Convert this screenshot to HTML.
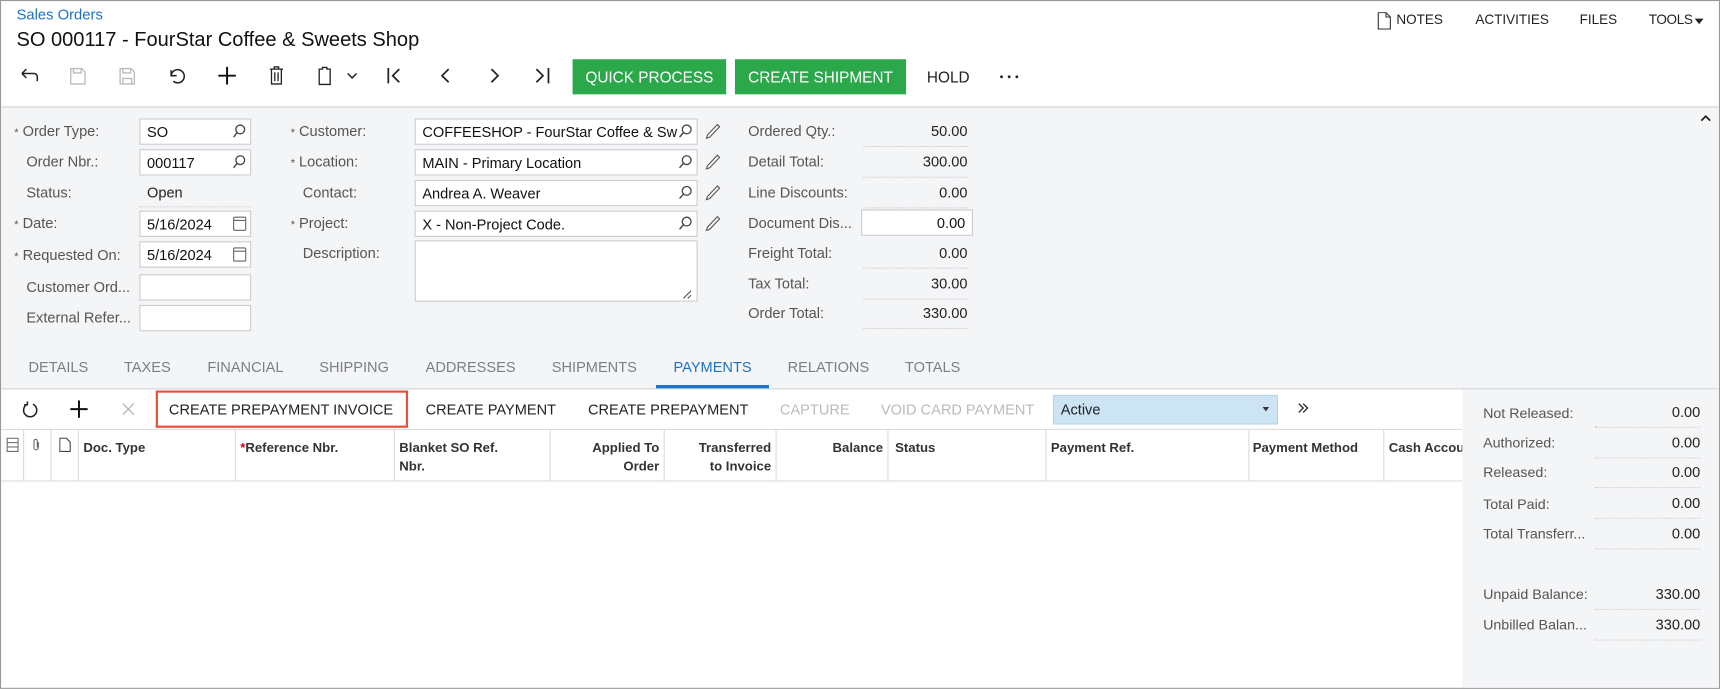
<!DOCTYPE html>
<html><head><meta charset="utf-8"><style>
*{box-sizing:border-box;margin:0;padding:0}
body{width:1720px;height:689px;overflow:hidden;background:#fff;font-family:"Liberation Sans",Arial,sans-serif;}
#w{position:absolute;left:0;top:0;width:1568px;height:628px;transform:scale(1.09694);transform-origin:0 0;border:1px solid #9a9a9a;overflow:hidden;color:#222;font-size:13.3px}
.a{position:absolute;white-space:nowrap}
.lb{color:#555;font-size:13.3px}
.inp{position:absolute;height:24px;background:#fff;border:1px solid #c9ccd0;font-size:13.3px;padding:4px 6px 0;line-height:15px;color:#111;white-space:nowrap;overflow:hidden}
.val{position:absolute;width:95px;text-align:right;border-bottom:1px dotted #c8c8c8;height:22px;font-size:13.3px}
.tab{position:absolute;top:326px;color:#7a7f87;font-size:13.3px}
.th{position:absolute;top:399px;font-size:12px;font-weight:bold;color:#333;line-height:17px}
.sep{position:absolute;top:391px;width:1px;height:46px;background:#dcdcdc}
.rl{position:absolute;left:1351px;color:#555;font-size:13px}
.rv{position:absolute;left:1453px;width:96px;text-align:right;font-size:13.3px;border-bottom:1px dotted #ccc;height:22px}
svg{position:absolute}
</style></head><body><div id="w">
<div class="a" style="left:14px;top:5px;color:#1a73c7;font-size:13.5px">Sales Orders</div>
<div class="a" style="left:14px;top:24px;font-size:18.3px;color:#111">SO 000117 - FourStar Coffee &amp; Sweets Shop</div>
<svg style="left:1254px;top:10px" width="14" height="16" viewBox="0 0 14 16"><path d="M1.5 .5h7l4 4v11h-11z M8.5 .5v4h4" fill="none" stroke="#333"/></svg>
<div class="a" style="left:1272px;top:10px;font-size:12.3px">NOTES</div>
<div class="a" style="left:1344px;top:10px;font-size:12.3px">ACTIVITIES</div>
<div class="a" style="left:1439px;top:10px;font-size:12.3px">FILES</div>
<div class="a" style="left:1502px;top:10px;font-size:12.3px;letter-spacing:-0.3px">TOOLS</div>
<div class="a" style="left:1544px;top:16px;width:0;height:0;border-left:4px solid transparent;border-right:4px solid transparent;border-top:5px solid #222"></div>
<!-- toolbar -->
<svg style="left:16px;top:60px" width="20" height="16" viewBox="0 0 20 16"><path d="M3 6h11a3 3 0 0 1 3 3v4 M3 6l4-4 M3 6l4 4" fill="none" stroke="#222" stroke-width="1.4"/></svg>
<svg style="left:62px;top:60px" width="16" height="17" viewBox="0 0 16 17"><path d="M1.5 1.5h10l3 3v11h-13z M4 1.5v4h7v-4" fill="none" stroke="#bbb" stroke-width="1.2"/></svg>
<svg style="left:107px;top:60px" width="16" height="17" viewBox="0 0 16 17"><path d="M1.5 1.5h10l3 3v11h-13z M4 1.5v4h7v-4 M4 15.5v-5h8v5" fill="none" stroke="#bbb" stroke-width="1.2"/></svg>
<svg style="left:151px;top:60px" width="18" height="16" viewBox="0 0 18 16"><path d="M4 3v5h5 M4 8a6 6 0 1 1 2 5" fill="none" stroke="#222" stroke-width="1.4"/></svg>
<svg style="left:197px;top:59px" width="18" height="18"><path d="M9 1v16 M1 9h16" stroke="#111" stroke-width="1.8"/></svg>
<svg style="left:244px;top:59px" width="14" height="18" viewBox="0 0 14 18"><path d="M1 3h12 M5 3V1h4v2 M2.5 3.5v13h9v-13 M5.5 6v8 M8.5 6v8" fill="none" stroke="#222" stroke-width="1.2"/></svg>
<svg style="left:288px;top:59px" width="40" height="18" viewBox="0 0 40 18"><path d="M2 3h3V1.5h4V3h3v14H2z" fill="none" stroke="#222" stroke-width="1.2"/><path d="M28 7l4 4 4-4" fill="none" stroke="#222" stroke-width="1.4"/></svg>
<svg style="left:351px;top:60px" width="16" height="16"><path d="M2 1v14 M12 2L6 8l6 6" fill="none" stroke="#222" stroke-width="1.6"/></svg>
<svg style="left:398px;top:60px" width="14" height="16"><path d="M10 2L4 8l6 6" fill="none" stroke="#222" stroke-width="1.6"/></svg>
<svg style="left:443px;top:60px" width="14" height="16"><path d="M4 2l6 6-6 6" fill="none" stroke="#222" stroke-width="1.6"/></svg>
<svg style="left:486px;top:60px" width="16" height="16"><path d="M2 2l6 6-6 6 M13 1v14" fill="none" stroke="#222" stroke-width="1.6"/></svg>
<div class="a" style="left:521px;top:53px;width:140px;height:32px;background:#2aa84a;color:#fff;font-size:14px;line-height:32px;text-align:center">QUICK PROCESS</div>
<div class="a" style="left:669px;top:53px;width:156px;height:32px;background:#2aa84a;color:#fff;font-size:14px;line-height:32px;text-align:center">CREATE SHIPMENT</div>
<div class="a" style="left:844px;top:61px;font-size:14px">HOLD</div>
<svg style="left:910px;top:67px" width="20" height="4"><circle cx="2" cy="2" r="1.3" fill="#222"/><circle cx="9" cy="2" r="1.3" fill="#222"/><circle cx="16" cy="2" r="1.3" fill="#222"/></svg>
<!-- form area -->
<div class="a" style="left:0;top:96px;width:1568px;height:258px;background:#f4f5f7;border-top:1px solid #d2d4d7;border-bottom:1px solid #d2d4d7"></div>
<svg style="left:1548px;top:102px" width="12" height="10"><path d="M2 7l4-4 4 4" fill="none" stroke="#222" stroke-width="1.6"/></svg>
<div class="a lb" style="left:12px;top:111px"><span style="font-size:10px">*</span> Order Type:</div>
<div class="a lb" style="left:23px;top:139px">Order Nbr.:</div>
<div class="a lb" style="left:23px;top:167px">Status:</div>
<div class="a lb" style="left:12px;top:195px"><span style="font-size:10px">*</span> Date:</div>
<div class="a lb" style="left:12px;top:224px"><span style="font-size:10px">*</span> Requested On:</div>
<div class="a lb" style="left:23px;top:253px">Customer Ord...</div>
<div class="a lb" style="left:23px;top:281px">External Refer...</div>
<div class="inp" style="left:126px;top:107px;width:102px">SO</div>
<div class="inp" style="left:126px;top:135px;width:102px">000117</div>
<div class="a" style="left:133px;top:167px">Open</div>
<div class="a" style="left:126px;top:187px;width:102px;border-bottom:1px dotted #ccc"></div>
<div class="inp" style="left:126px;top:191px;width:102px">5/16/2024</div>
<div class="inp" style="left:126px;top:219px;width:102px">5/16/2024</div>
<div class="inp" style="left:126px;top:249px;width:102px"></div>
<div class="inp" style="left:126px;top:277px;width:102px"></div>
<svg style="left:211px;top:112px" width="12" height="13"><circle cx="7" cy="5" r="4" fill="none" stroke="#444" stroke-width="1.2"/><path d="M4 8L1 12" stroke="#444" stroke-width="1.3"/></svg>
<svg style="left:211px;top:140px" width="12" height="13"><circle cx="7" cy="5" r="4" fill="none" stroke="#444" stroke-width="1.2"/><path d="M4 8L1 12" stroke="#444" stroke-width="1.3"/></svg>
<svg style="left:211px;top:195px" width="13" height="15"><rect x="1" y="2" width="11" height="12" rx="1" fill="none" stroke="#666"/><path d="M1 5h11" stroke="#666"/></svg>
<svg style="left:211px;top:223px" width="13" height="15"><rect x="1" y="2" width="11" height="12" rx="1" fill="none" stroke="#666"/><path d="M1 5h11" stroke="#666"/></svg>
<div class="a lb" style="left:264px;top:111px"><span style="font-size:10px">*</span> Customer:</div>
<div class="a lb" style="left:264px;top:139px"><span style="font-size:10px">*</span> Location:</div>
<div class="a lb" style="left:275px;top:167px">Contact:</div>
<div class="a lb" style="left:264px;top:195px"><span style="font-size:10px">*</span> Project:</div>
<div class="a lb" style="left:275px;top:222px">Description:</div>
<div class="inp" style="left:377px;top:107px;width:258px;padding-right:24px">COFFEESHOP - FourStar Coffee &amp; Sw</div>
<div class="inp" style="left:377px;top:135px;width:258px">MAIN - Primary Location</div>
<div class="inp" style="left:377px;top:163px;width:258px">Andrea A. Weaver</div>
<div class="inp" style="left:377px;top:191px;width:258px">X - Non-Project Code.</div>
<div class="inp" style="left:377px;top:218px;width:258px;height:56px"></div>
<svg style="left:620px;top:262px" width="10" height="10"><path d="M9 2L2 9 M9 6L6 9" stroke="#555"/></svg>
<svg style="left:617px;top:112px" width="13" height="13"><circle cx="8" cy="5" r="4" fill="#fff" stroke="#444" stroke-width="1.2"/><path d="M5 8L1.5 12" stroke="#444" stroke-width="1.3"/></svg>
<svg style="left:617px;top:140px" width="13" height="13"><circle cx="8" cy="5" r="4" fill="none" stroke="#444" stroke-width="1.2"/><path d="M5 8L1.5 12" stroke="#444" stroke-width="1.3"/></svg>
<svg style="left:617px;top:168px" width="13" height="13"><circle cx="8" cy="5" r="4" fill="none" stroke="#444" stroke-width="1.2"/><path d="M5 8L1.5 12" stroke="#444" stroke-width="1.3"/></svg>
<svg style="left:617px;top:196px" width="13" height="13"><circle cx="8" cy="5" r="4" fill="none" stroke="#444" stroke-width="1.2"/><path d="M5 8L1.5 12" stroke="#444" stroke-width="1.3"/></svg>
<svg style="left:642px;top:111px" width="14" height="15"><path d="M11 1.5l2 2L4 13l-3 1 1-3z" fill="none" stroke="#555"/></svg>
<svg style="left:642px;top:139px" width="14" height="15"><path d="M11 1.5l2 2L4 13l-3 1 1-3z" fill="none" stroke="#555"/></svg>
<svg style="left:642px;top:167px" width="14" height="15"><path d="M11 1.5l2 2L4 13l-3 1 1-3z" fill="none" stroke="#555"/></svg>
<svg style="left:642px;top:195px" width="14" height="15"><path d="M11 1.5l2 2L4 13l-3 1 1-3z" fill="none" stroke="#555"/></svg>
<div class="a lb" style="left:681px;top:111px">Ordered Qty.:</div>
<div class="a lb" style="left:681px;top:139px">Detail Total:</div>
<div class="a lb" style="left:681px;top:167px">Line Discounts:</div>
<div class="a lb" style="left:681px;top:195px">Document Dis...</div>
<div class="a lb" style="left:681px;top:222px">Freight Total:</div>
<div class="a lb" style="left:681px;top:250px">Tax Total:</div>
<div class="a lb" style="left:681px;top:277px">Order Total:</div>
<div class="val" style="left:786px;top:111px">50.00</div>
<div class="val" style="left:786px;top:139px">300.00</div>
<div class="val" style="left:786px;top:167px">0.00</div>
<div class="inp" style="left:784px;top:190px;width:102px;text-align:right">0.00</div>
<div class="val" style="left:786px;top:222px">0.00</div>
<div class="val" style="left:786px;top:250px">30.00</div>
<div class="val" style="left:786px;top:277px">330.00</div>
<!-- tabs -->
<div class="tab" style="left:25px">DETAILS</div>
<div class="tab" style="left:112px">TAXES</div>
<div class="tab" style="left:188px">FINANCIAL</div>
<div class="tab" style="left:290px">SHIPPING</div>
<div class="tab" style="left:387px">ADDRESSES</div>
<div class="tab" style="left:502px">SHIPMENTS</div>
<div class="tab" style="left:613px;color:#1a73c7">PAYMENTS</div>
<div class="tab" style="left:717px">RELATIONS</div>
<div class="tab" style="left:824px">TOTALS</div>
<div class="a" style="left:597px;top:350px;width:103px;height:3px;background:#1a73c7"></div>
<!-- grid toolbar -->
<div class="a" style="left:1332px;top:354px;width:236px;height:274px;background:#f4f5f7"></div>
<svg style="left:19px;top:364px" width="16" height="17" viewBox="0 0 16 17"><path d="M10 3.5A6 6 0 1 1 5 3.5 M5 1v3H2" fill="none" stroke="#222" stroke-width="1.4"/></svg>
<svg style="left:63px;top:364px" width="16" height="16"><path d="M8 0v16 M0 8h16" stroke="#111" stroke-width="1.8"/></svg>
<svg style="left:110px;top:366px" width="12" height="12"><path d="M1 1l10 10 M11 1L1 11" stroke="#bbb" stroke-width="1.3"/></svg>
<div class="a" style="left:141px;top:355px;width:230px;height:34px;border:2px solid #e8503a"></div>
<div class="a" style="left:153px;top:365px">CREATE PREPAYMENT INVOICE</div>
<div class="a" style="left:387px;top:365px">CREATE PAYMENT</div>
<div class="a" style="left:535px;top:365px">CREATE PREPAYMENT</div>
<div class="a" style="left:710px;top:365px;color:#bbb">CAPTURE</div>
<div class="a" style="left:802px;top:365px;color:#bbb">VOID CARD PAYMENT</div>
<div class="a" style="left:959px;top:359px;width:205px;height:27px;background:#cde4f5;border:1px solid #b8d3e8;padding:6px 6px;line-height:14px">Active</div>
<div class="a" style="left:1150px;top:370px;border-left:3px solid transparent;border-right:3px solid transparent;border-top:4px solid #333"></div>
<svg style="left:1181px;top:365px" width="12" height="14"><path d="M2 2l4 4-4 4 M6 2l4 4-4 4" fill="none" stroke="#222" stroke-width="1.2"/></svg>
<!-- grid header -->
<div class="a" style="left:0;top:390px;width:1332px;height:1px;background:#dcdcdc"></div>
<div class="a" style="left:0;top:437px;width:1332px;height:1px;background:#dcdcdc"></div>
<div class="sep" style="left:20px"></div><div class="sep" style="left:45px"></div><div class="sep" style="left:70px"></div><div class="sep" style="left:213px"></div><div class="sep" style="left:358px"></div><div class="sep" style="left:500px"></div><div class="sep" style="left:604px"></div><div class="sep" style="left:706px"></div><div class="sep" style="left:808px"></div><div class="sep" style="left:952px"></div><div class="sep" style="left:1137px"></div><div class="sep" style="left:1260px"></div>
<svg style="left:5px;top:398px" width="11" height="13"><rect x=".5" y=".5" width="10" height="12" fill="none" stroke="#666"/><path d="M1 4.5h9 M1 8.5h9" stroke="#666"/></svg>
<svg style="left:27px;top:398px" width="10" height="13"><path d="M7 4v5a2 2 0 0 1-4 0V3a1.5 1.5 0 0 1 3 0v6" fill="none" stroke="#666"/></svg>
<svg style="left:53px;top:398px" width="11" height="13"><path d="M.5 .5h6l3.5 3.5v8.5h-9.5z" fill="none" stroke="#444"/></svg>
<div class="th" style="left:75px">Doc. Type</div>
<div class="th" style="left:218px"><span style="color:#d0021b">*</span>Reference Nbr.</div>
<div class="th" style="left:363px">Blanket SO Ref.<br>Nbr.</div>
<div class="th" style="left:500px;width:100px;text-align:right">Applied To<br>Order</div>
<div class="th" style="left:604px;width:98px;text-align:right">Transferred<br>to Invoice</div>
<div class="th" style="left:706px;width:98px;text-align:right">Balance</div>
<div class="th" style="left:815px">Status</div>
<div class="th" style="left:957px">Payment Ref.</div>
<div class="th" style="left:1141px">Payment Method</div>
<div class="th" style="left:1265px;width:67px;overflow:hidden;white-space:nowrap">Cash Account</div>
<!-- right panel -->
<div class="rl" style="top:368px">Not Released:</div><div class="rv" style="top:367px">0.00</div>
<div class="rl" style="top:395px">Authorized:</div><div class="rv" style="top:395px">0.00</div>
<div class="rl" style="top:422px">Released:</div><div class="rv" style="top:422px">0.00</div>
<div class="rl" style="top:451px">Total Paid:</div><div class="rv" style="top:450px">0.00</div>
<div class="rl" style="top:478px">Total Transferr...</div><div class="rv" style="top:478px">0.00</div>
<div class="rl" style="top:533px">Unpaid Balance:</div><div class="rv" style="top:533px">330.00</div>
<div class="rl" style="top:561px">Unbilled Balan...</div><div class="rv" style="top:561px">330.00</div>
</div>
</body></html>
